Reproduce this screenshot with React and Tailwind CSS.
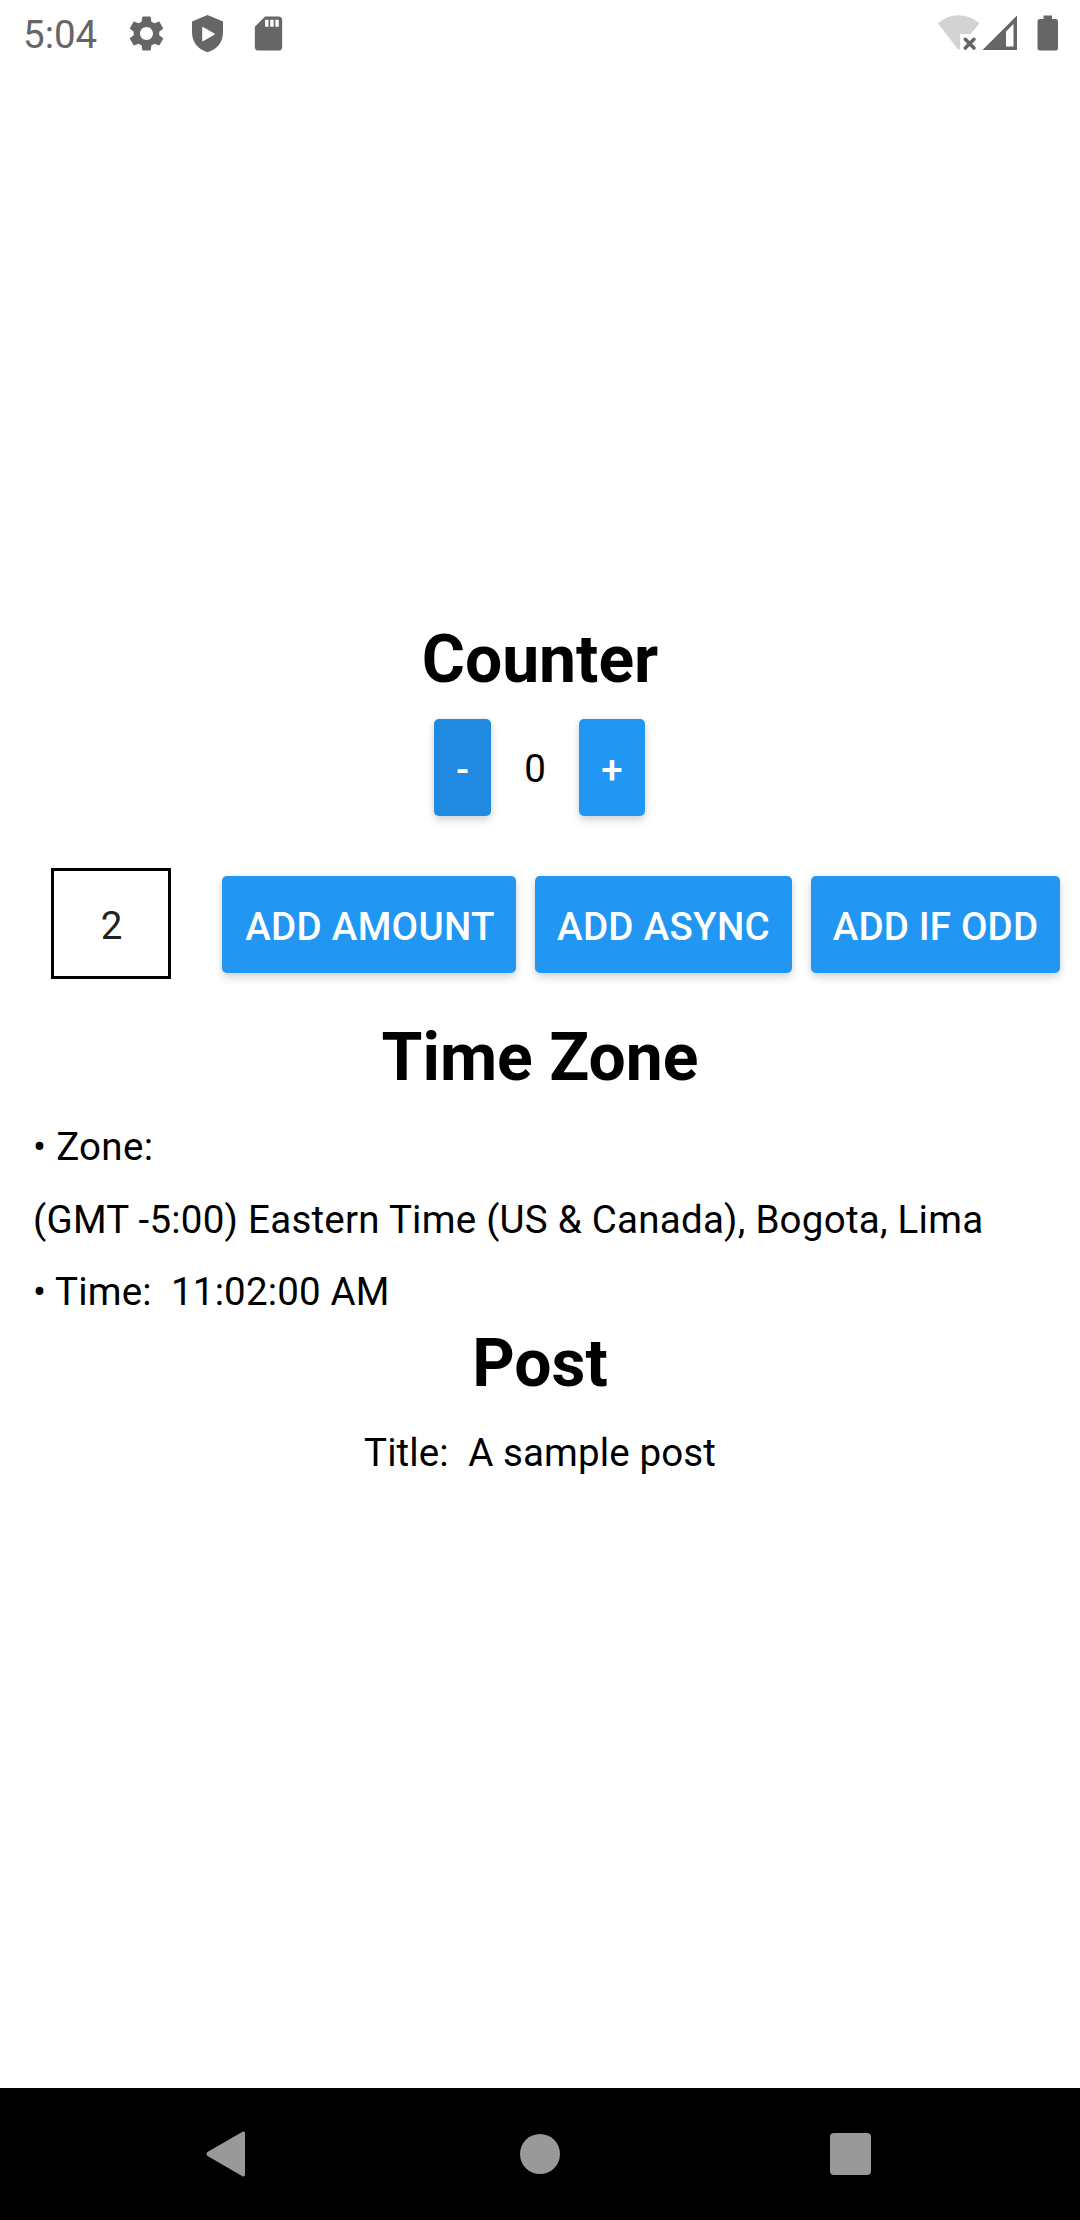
import React from "react";

const BUTTON =
  "flex h-[97px] shrink-0 items-center justify-center rounded-[5px] pt-[4px] text-[38.5px] leading-[46px] font-medium text-white shadow-[0_5px_9px_rgba(0,0,0,0.14),0_0_6px_rgba(0,0,0,0.08)]";

function StatusBar() {
  return (
    <header className="flex h-[66px] items-center pl-[23px] text-[#666666]">
      <span className="w-[74px] pt-[3px] text-[38.5px] leading-[46px]">5:04</span>
      <svg className="ml-[29px] h-[41px] w-[41px]" viewBox="0 0 24 24" fill="currentColor">
        <path d="M19.43 12.98c.04-.32.07-.64.07-.98s-.03-.66-.07-.98l2.11-1.65c.19-.15.24-.42.12-.64l-2-3.46c-.12-.22-.39-.3-.61-.22l-2.49 1c-.52-.4-1.08-.73-1.69-.98l-.38-2.65C14.46 2.18 14.25 2 14 2h-4c-.25 0-.46.18-.49.42l-.38 2.65c-.61.25-1.17.59-1.69.98l-2.49-1c-.23-.09-.49 0-.61.22l-2 3.46c-.13.22-.07.49.12.64l2.11 1.65c-.04.32-.07.65-.07.98s.03.66.07.98l-2.11 1.65c-.19.15-.24.42-.12.64l2 3.46c.12.22.39.3.61.22l2.49-1c.52.4 1.08.73 1.69.98l.38 2.65c.03.24.24.42.49.42h4c.25 0 .46-.18.49-.42l.38-2.65c.61-.25 1.17-.59 1.69-.98l2.49 1c.23.09.49 0 .61-.22l2-3.46c.12-.22.07-.49-.12-.64l-2.11-1.65zM12 15.8c-2.100 0-3.800-1.700-3.800-3.800s1.700-3.800 3.800-3.800 3.800 1.700 3.800 3.800-1.700 3.800-3.800 3.800z" />
      </svg>
      <svg className="ml-[20px] h-[41px] w-[41px]" viewBox="0 0 41 41" fill="currentColor">
        <path
          fillRule="evenodd"
          d="M20.5 2 5 8.5V19.5C5 29.5 11.5 36.8 20.5 39.2 29.500 36.800 36 29.500 36 19.500V8.500ZM15.200 15V27.500Q15.200 28.800 16.400 28.100L27.400 21.800Q28.400 21.200 27.400 20.600L16.400 14.300Q15.200 13.700 15.200 15Z"
        />
      </svg>
      <svg className="ml-[20px] h-[41px] w-[41px]" viewBox="0 0 24 24" fill="currentColor">
        <path d="M18 2h-8L4.020 8 4 20c0 1.100.9 2 2 2h12c1.100 0 2-.9 2-2V4c0-1.100-.9-2-2-2zm-6 6h-2V4h2v4zm3 0h-2V4h2v4zm3 0h-2V4h2v4z" />
      </svg>
      <svg className="ml-auto h-[66px] w-[150px]" viewBox="930 0 150 66" fill="currentColor">
        <path d="M938 23.500C949.500 12.500 968 12.500 979.500 23.500L970.500 34H960V48.500L958.500 50Z" fill="#d3d3d3" />
        <path d="M965.300 39.300 974 48M974 39.300 965.300 48" stroke="currentColor" strokeWidth="3.600" strokeLinecap="round" fill="none" />
        <path fillRule="evenodd" d="M1017 15.500V50H982.500ZM1013.500 24 1006 31.500V46.500H1013.500Z" />
        <path d="M1043.500 15.500H1052V19H1055.500Q1058 19 1058 21.500V48Q1058 50.500 1055.500 50.500H1040Q1037.500 50.500 1037.500 48V21.500Q1037.500 19 1040 19H1043.500Z" />
      </svg>
    </header>
  );
}

function Heading({ className, children }) {
  return (
    <h1 className={"text-center text-[66px] leading-[78px] font-bold " + className}>{children}</h1>
  );
}

function NavBar() {
  return (
    <nav className="flex h-[132px] items-center bg-black pl-[206px] text-[#999999]">
      <svg className="h-[46px] w-[40px]" viewBox="0 0 40 46" fill="currentColor">
        <path d="M36.500 0.700Q39 -0.300 39 2.500V43.500Q39 46.300 36.500 45.300L1.500 25Q-0.500 23 1.500 21Z" />
      </svg>
      <div className="ml-[274px] h-[40px] w-[40px] rounded-full bg-[#999999]" />
      <div className="ml-[270px] h-[42px] w-[41px] rounded-[4px] bg-[#999999]" />
    </nav>
  );
}

export default function App() {
  return (
    <div className="flex h-[2220px] w-[1080px] flex-col overflow-hidden bg-white font-[Roboto,sans-serif] text-black">
      <StatusBar />
      <main className="flex flex-1 flex-col pt-[555px] text-[38.5px] leading-[46px]">
        <Heading className="">Counter</Heading>
        <div className="mt-[20px] flex items-center pl-[434px]">
          <button className={BUTTON + " w-[57px] bg-[#1f8ae0]"}>-</button>
          <span className="w-[88px] pt-[3px] text-center">0</span>
          <button className={BUTTON + " w-[66px] bg-[#2196f3]"}>+</button>
        </div>
        <div className="mt-[52px] flex items-start pl-[51px]">
          <div className="flex h-[111px] w-[120px] items-center justify-center border-[3px] border-black pt-[4px] pl-[1px] text-[#212121]">
            2
          </div>
          <div className="mt-[8px] ml-[51px] flex gap-[19px]">
            <button className={BUTTON + " w-[294px] bg-[#2196f3] pl-[2px] tracking-[0.3px]"}>ADD AMOUNT</button>
            <button className={BUTTON + " w-[257px] bg-[#2196f3] tracking-[0.3px]"}>ADD ASYNC</button>
            <button className={BUTTON + " w-[249px] bg-[#2196f3] tracking-[0.15px]"}>ADD IF ODD</button>
          </div>
        </div>
        <Heading className="mt-[40px]">Time Zone</Heading>
        <div className="mt-[27px] flex flex-col gap-[26.5px] pl-[33px] whitespace-pre">
          <p className="tracking-[0.3px]">• Zone:</p>
          <p className="tracking-[0.25px]">(GMT -5:00) Eastern Time (US &amp; Canada), Bogota, Lima</p>
          <p className="tracking-[0.15px]">{"• Time:  11:02:00 AM"}</p>
        </div>
        <Heading className="mt-[10px]">Post</Heading>
        <p className="mt-[27px] text-center whitespace-pre tracking-[0.12px]">{"Title:  A sample post"}</p>
      </main>
      <NavBar />
    </div>
  );
}
